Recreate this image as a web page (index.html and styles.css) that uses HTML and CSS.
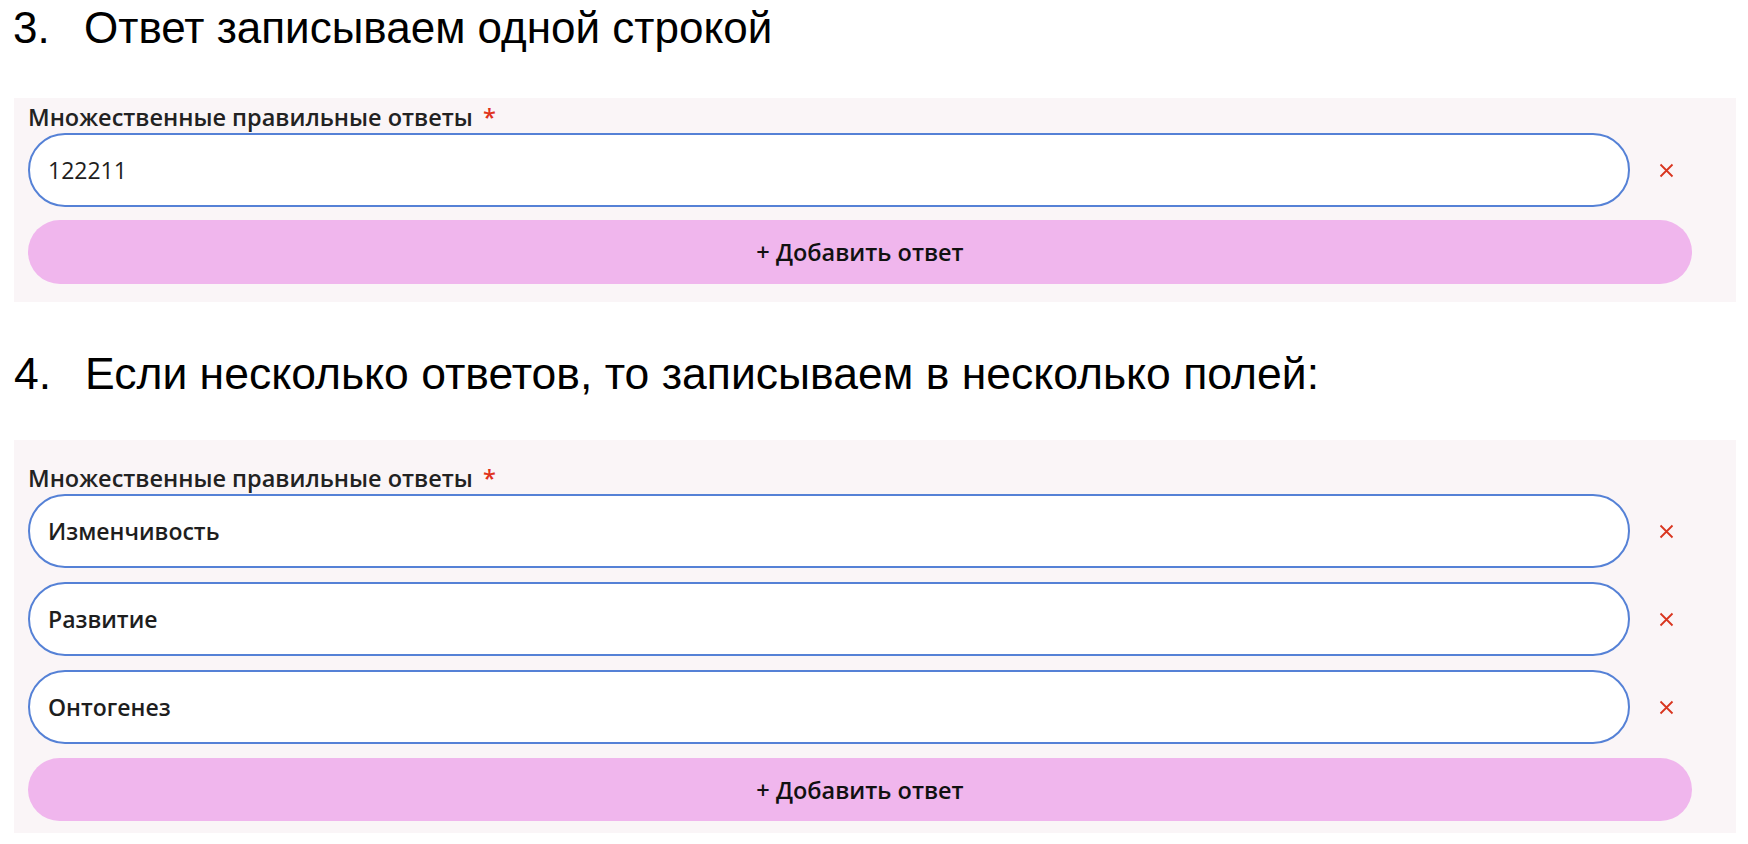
FILE: index.html
```html
<!DOCTYPE html>
<html lang="ru">
<head>
<meta charset="utf-8">
<link rel="stylesheet" href="styles.css">
</head>
<body>
<div class="page">
  <div class="step step-first">
    <span class="step-num">3.</span>
    <span class="step-text">Ответ записываем одной строкой</span>
  </div>

  <section class="panel">
    <div class="label">Множественные правильные ответы <span class="req">*</span></div>
    <div class="rows">
      <div class="row">
        <div class="field"><span class="value value-num">122211</span></div>
        <span class="remove"><svg width="15" height="15" viewBox="0 0 15 15"><path d="M1.5 1.5L13.5 13.5M13.5 1.5L1.5 13.5" stroke="#d9351f" stroke-width="1.8" fill="none"/></svg></span>
      </div>
    </div>
    <div class="add">+ Добавить ответ</div>
  </section>

  <div class="step step-second">
    <span class="step-num">4.</span>
    <span class="step-text">Если несколько ответов, то записываем в несколько полей:</span>
  </div>

  <section class="panel panel-tall">
    <div class="label">Множественные правильные ответы <span class="req">*</span></div>
    <div class="rows">
      <div class="row">
        <div class="field"><span class="value">Изменчивость</span></div>
        <span class="remove"><svg width="15" height="15" viewBox="0 0 15 15"><path d="M1.5 1.5L13.5 13.5M13.5 1.5L1.5 13.5" stroke="#d9351f" stroke-width="1.8" fill="none"/></svg></span>
      </div>
      <div class="row">
        <div class="field"><span class="value">Развитие</span></div>
        <span class="remove"><svg width="15" height="15" viewBox="0 0 15 15"><path d="M1.5 1.5L13.5 13.5M13.5 1.5L1.5 13.5" stroke="#d9351f" stroke-width="1.8" fill="none"/></svg></span>
      </div>
      <div class="row">
        <div class="field"><span class="value">Онтогенез</span></div>
        <span class="remove"><svg width="15" height="15" viewBox="0 0 15 15"><path d="M1.5 1.5L13.5 13.5M13.5 1.5L1.5 13.5" stroke="#d9351f" stroke-width="1.8" fill="none"/></svg></span>
      </div>
    </div>
    <div class="add add-last">+ Добавить ответ</div>
  </section>
</div>
</body>
</html>
```

FILE: styles.css
```css
* { box-sizing: border-box; }
html, body { margin: 0; padding: 0; background: #ffffff; }
body { width: 1748px; height: 844px; overflow: hidden; }

.page {
  padding: 0 12px 0 14px;
}

.step {
  display: flex;
  font-family: "Liberation Sans", Arial, sans-serif;
  font-size: 44px;
  line-height: 56px;
  color: #000;
}
.step-num { width: 71px; flex: none; }
.step-first { margin-left: -1px; }
.step-second { margin-top: 44px; margin-bottom: 38px; font-size: 44.5px; }

.panel {
  width: 1722px;
  background: #faf5f7;
  padding: 5px 44px 18px 14px;
  margin-top: 42px;
}
.panel-tall { margin-top: 0; padding-top: 24px; padding-bottom: 12px; }

.label {
  font-family: "Open Sans", "Noto Sans", sans-serif;
  font-size: 23.5px;
  font-weight: 600;
  line-height: 28px;
  color: #222222;
  margin-bottom: 2px;
}
.req { color: #e0321c; margin-left: 4px; }

.rows { display: flex; flex-direction: column; gap: 14px; }

.row { display: flex; align-items: center; }

.field {
  flex: 1;
  height: 74px;
  border: 2px solid #5581d6;
  border-radius: 37px;
  background: #ffffff;
  padding-left: 18px;
  display: flex;
  align-items: center;
}
.value {
  font-family: "Open Sans", "Noto Sans", sans-serif;
  font-size: 23px;
  font-weight: 600;
  color: #1e1e1e;
}
.value-num { font-weight: 500; }

.remove {
  width: 62px;
  flex: none;
  display: flex;
  padding-left: 29px;
}
.remove svg { display: block; }

.add {
  margin-top: 13px;
  height: 64px;
  border-radius: 32px;
  background: #f0b6ed;
  display: flex;
  align-items: center;
  justify-content: center;
  font-family: "Open Sans", "Noto Sans", sans-serif;
  font-size: 23.5px;
  font-weight: 600;
  color: #111111;
}
.add-last { margin-top: 14px; height: 63px; }
```
